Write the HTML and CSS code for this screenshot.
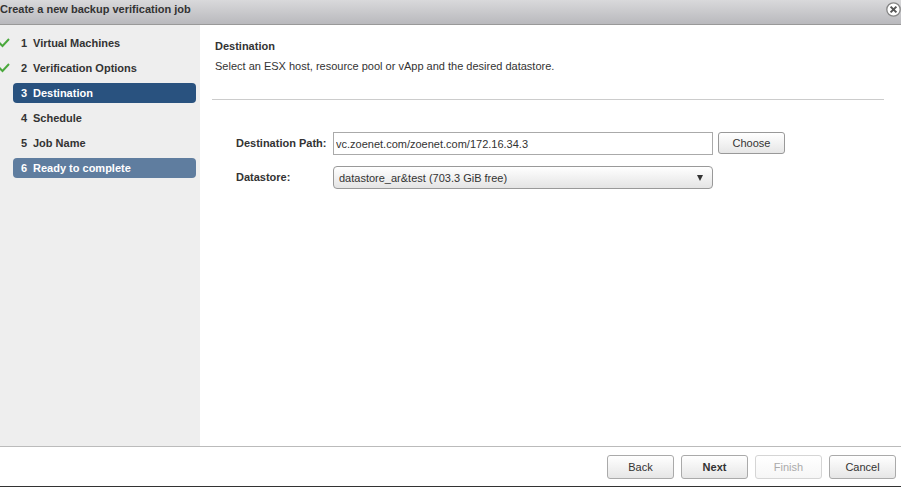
FILE: index.html
```html
<!DOCTYPE html>
<html lang="en">
<head>
  <meta charset="UTF-8">
  <meta name="viewport" content="width=device-width, initial-scale=1.0">
  <title>Create a new backup verification job</title>
  <link rel="stylesheet" href="styles.css">
</head>
<body>
  <div class="wizard">

    <header class="titlebar">
      <h1>Create a new backup verification job</h1>
      <button type="button" class="close" aria-label="Close">
        <svg width="15" height="15" viewBox="0 0 15 15">
          <circle cx="7.5" cy="7.5" r="6.7" fill="#fff" stroke="#858585" stroke-width="1.3"/>
          <path d="M4.6 4.6l5.8 5.8M10.4 4.6l-5.8 5.8" stroke="#555" stroke-width="2"/>
        </svg>
      </button>
    </header>

    <div class="wizard-body">
      <!-- Steps -->
      <nav class="sidebar">
        <ol class="steps">
          <li>
            <svg class="check" width="13" height="10" viewBox="0 0 13 10"><path d="M-1 4.5L2.5 8L9 1" fill="none" stroke="#4aa83c" stroke-width="2"/></svg>
            <a href="#" class="step"><span class="num">1</span>Virtual Machines</a>
          </li>
          <li>
            <svg class="check" width="13" height="10" viewBox="0 0 13 10"><path d="M-1 4.5L2.5 8L9 1" fill="none" stroke="#4aa83c" stroke-width="2"/></svg>
            <a href="#" class="step"><span class="num">2</span>Verification Options</a>
          </li>
          <li><a href="#" class="step current" aria-current="step"><span class="num">3</span>Destination</a></li>
          <li><a href="#" class="step"><span class="num">4</span>Schedule</a></li>
          <li><a href="#" class="step"><span class="num">5</span>Job Name</a></li>
          <li><a href="#" class="step highlight"><span class="num">6</span>Ready to complete</a></li>
        </ol>
      </nav>

      <!-- Current step -->
      <main class="content">
        <div class="intro">
          <h2>Destination</h2>
          <p>Select an ESX host, resource pool or vApp and the desired datastore.</p>
        </div>

        <form class="form" id="destinationForm">
          <div class="row">
            <label for="path">Destination Path:</label>
            <input type="text" class="field" id="path" value="vc.zoenet.com/zoenet.com/172.16.34.3">
            <button type="button" class="btn choose">Choose</button>
          </div>
          <div class="row">
            <label for="datastore">Datastore:</label>
            <div class="field select-wrap">
              <select id="datastore">
                <option>datastore_ar&amp;test (703.3 GiB free)</option>
              </select>
              <svg class="arrow" width="6" height="6" viewBox="0 0 6 6"><path d="M0 0h6L3 6z" fill="#333"/></svg>
            </div>
          </div>
        </form>
      </main>
    </div>

    <footer class="footer">
      <button type="button" class="btn">Back</button>
      <button type="button" class="btn primary">Next</button>
      <button type="button" class="btn" disabled>Finish</button>
      <button type="button" class="btn">Cancel</button>
    </footer>

  </div>
</body>
</html>
```

FILE: styles.css
```css
* {
  box-sizing: border-box;
}
body {
  margin: 0;
  font-family: "Liberation Sans", Arial, sans-serif;
  font-size: 11px;
  line-height: 14px;
  color: #333;
  background: #fff;
}
h1, h2, p {
  margin: 0;
  font-size: 11px;
}
button, input, select {
  font: inherit;
  color: inherit;
}
.wizard {
  display: flex;
  flex-direction: column;
  min-height: 100vh;
  border-bottom: 1px solid #333;
}

/* Title bar */
.titlebar {
  display: flex;
  align-items: center;
  justify-content: space-between;
  height: 25px;
  padding-bottom: 6px;
  background: linear-gradient(#d9d9db, #b9b9bd);
  border-bottom: 1px solid #999;
}
.close {
  display: flex;
  padding: 0;
  border: 0;
  background: none;
  cursor: pointer;
}

/* Steps */
.wizard-body {
  display: flex;
  flex: 1;
}
.sidebar {
  flex: 0 0 200px;
  padding: 8px 4px 8px 0;
  background: #eee;
}
.steps {
  display: flex;
  flex-direction: column;
  gap: 5px;
  margin: 0;
  padding: 0;
  list-style: none;
}
.steps li {
  display: flex;
  align-items: center;
  justify-content: flex-end;
}
.check {
  flex: 0 0 13px;
}
.step {
  display: flex;
  align-items: center;
  width: 183px;
  height: 20px;
  padding: 0 8px;
  border-radius: 4px;
  font-weight: bold;
  color: #333;
  text-decoration: none;
}
.num {
  width: 12px;
}
.current {
  background: #29527f;
  color: #fff;
}
.highlight {
  background: #5f7d9f;
  color: #fff;
}

/* Content */
.content {
  flex: 1;
  padding: 14px 17px 14px 12px;
}
.intro {
  display: flex;
  flex-direction: column;
  gap: 6px;
  padding: 0 3px 26px;
  border-bottom: 1px solid #ccc;
}
.form {
  display: flex;
  flex-direction: column;
  gap: 11px;
  padding: 32px 24px;
}
.row {
  display: flex;
  align-items: flex-start;
}
.row label {
  flex: 0 0 97px;
  line-height: 22px;
  font-weight: bold;
  white-space: nowrap;
}
.field {
  flex: 1;
  min-width: 0;
  max-width: 380px;
  height: 23px;
}
input.field {
  padding: 0 2px;
  border: 1px solid #aaa;
  background: #fff;
}
.select-wrap {
  display: grid;
  align-items: center;
}
.select-wrap select {
  grid-area: 1 / 1;
  width: 100%;
  height: 23px;
  padding: 0 20px 0 5px;
  appearance: none;
  border: 1px solid #999;
  border-radius: 4px;
  background: linear-gradient(#fff, #e4e4e4);
}
.arrow {
  grid-area: 1 / 1;
  justify-self: end;
  margin-right: 10px;
  pointer-events: none;
}

/* Buttons */
.btn {
  min-width: 67px;
  height: 24px;
  padding: 0 12px;
  border: 1px solid #aaa;
  border-radius: 3px;
  background: linear-gradient(#fff, #e6e6e6);
  cursor: pointer;
}
.btn:disabled {
  color: #aaa;
  border-color: #d5d5d5;
  background: linear-gradient(#fff, #f6f6f6);
  cursor: default;
}
.primary {
  font-weight: bold;
}
.choose {
  height: 22px;
  margin-left: 5px;
  border-color: #999;
}

/* Footer */
.footer {
  display: flex;
  justify-content: flex-end;
  gap: 7px;
  padding: 8px 5px 7px;
  border-top: 1px solid #bbb;
}
```
